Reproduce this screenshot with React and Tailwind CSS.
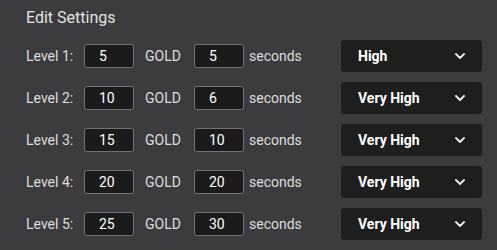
const levels = [
  { level: 1, gold: 5, seconds: 5, quality: 'High' },
  { level: 2, gold: 10, seconds: 6, quality: 'Very High' },
  { level: 3, gold: 15, seconds: 10, quality: 'Very High' },
  { level: 4, gold: 20, seconds: 20, quality: 'Very High' },
  { level: 5, gold: 25, seconds: 30, quality: 'Very High' },
];

const Chevron = () => (
  <svg width="12" height="8" viewBox="0 0 12 8" fill="none">
    <path d="M2 2l4 4 4-4" stroke="#e5e5e5" strokeWidth="2" strokeLinecap="round" strokeLinejoin="round" />
  </svg>
);

export default function App() {
  return (
    <div
      className="w-[497px] h-[250px] bg-[#3c3c3e] text-[#dcdcdc] overflow-hidden"
      style={{ fontFamily: 'Roboto, "Liberation Sans", sans-serif' }}
    >
      <div className="pl-[26px] pt-[7px]">
        <h2 className="text-[16px] leading-[22px] text-[#e2e2e2]">Edit Settings</h2>
        <div className="mt-[11px] flex flex-col gap-[10px]">
          {levels.map((row) => (
            <div key={row.level} className="flex items-center h-[32px] text-[14px]">
              <span className="w-[58px] shrink-0">Level {row.level}:</span>
              <div className="w-[50px] h-[24px] shrink-0 rounded-[3px] border border-[#737373] bg-[#1b1b1b] text-white pl-[14px] flex items-center">
                {row.gold}
              </div>
              <span className="ml-[11px] w-[49px] shrink-0">GOLD</span>
              <div className="w-[50px] h-[24px] shrink-0 rounded-[3px] border border-[#737373] bg-[#1b1b1b] text-white pl-[14px] flex items-center">
                {row.seconds}
              </div>
              <span className="ml-[5px] w-[92px] shrink-0">seconds</span>
              <div className="w-[141px] h-[32px] shrink-0 rounded-[3px] bg-[#1e1e1e] flex items-center justify-between pl-[17px] pr-[16px]">
                <span className="font-bold text-white">{row.quality}</span>
                <Chevron />
              </div>
            </div>
          ))}
        </div>
      </div>
    </div>
  );
}
